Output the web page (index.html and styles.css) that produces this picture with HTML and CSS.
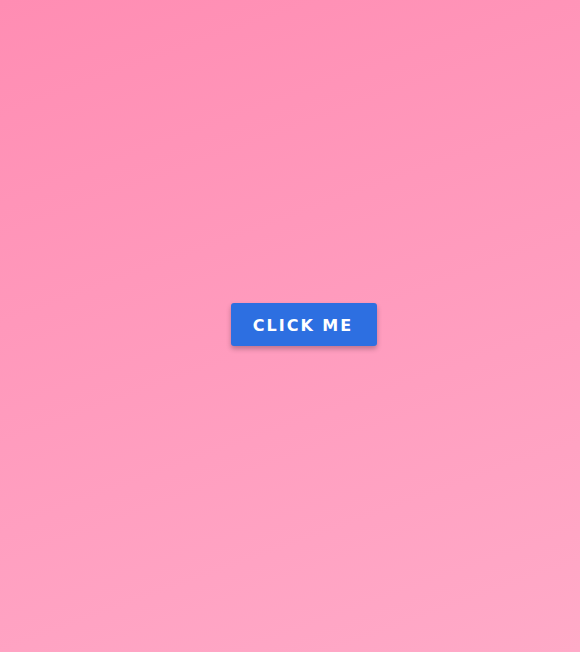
FILE: index.html
```html
<!DOCTYPE html>
<html>
<head>
<meta charset="utf-8">
<link rel="stylesheet" href="styles.css">
</head>
<body>
<main class="stage">
  <button class="btn">CLICK ME</button>
</main>
</body>
</html>
```
FILE: styles.css
```css
html, body {
  margin: 0;
  padding: 0;
  height: 100%;
}
.stage {
  height: 652px;
  display: flex;
  align-items: center;
  justify-content: center;
  background: linear-gradient(160deg, #ff8db3 0%, #ffaac8 100%);
}
.btn {
  width: 146px;
  height: 43px;
  border: none;
  border-radius: 3px;
  background: #2d6fe1;
  color: #fff;
  font-family: "DejaVu Sans", sans-serif;
  font-weight: 700;
  font-size: 16px;
  letter-spacing: 2px;
  padding: 2px 2px 0 0;
  margin-left: 28px;
  margin-top: -3px;
  box-shadow: 0 3px 5px rgba(0,0,0,0.25);
  cursor: pointer;
}
```
